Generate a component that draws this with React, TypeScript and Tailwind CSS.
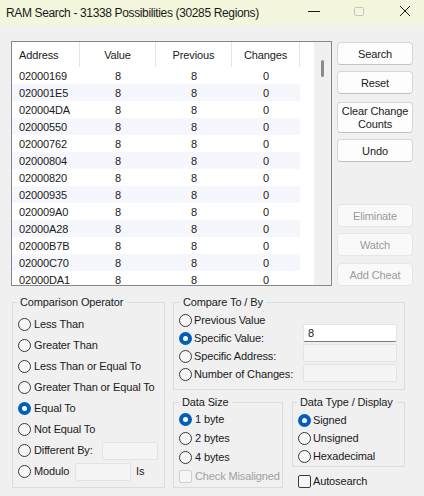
import React from "react";

const rows = [
  "02000169",
  "020001E5",
  "020004DA",
  "02000550",
  "02000762",
  "02000804",
  "02000820",
  "02000935",
  "020009A0",
  "02000A28",
  "02000B7B",
  "02000C70",
  "02000DA1",
];

function Radio({ checked }: { checked?: boolean }) {
  if (checked) {
    return (
      <span className="w-[13px] h-[13px] rounded-full bg-[#005fb8] flex items-center justify-center shrink-0">
        <span className="w-[5px] h-[5px] rounded-full bg-white" />
      </span>
    );
  }
  return <span className="w-[13px] h-[13px] rounded-full border border-[#3a3a3a] bg-[#f6f6f6] shrink-0" />;
}

function Check({ disabled }: { disabled?: boolean }) {
  return (
    <span
      className={
        disabled
          ? "w-[13px] h-[13px] rounded-[2px] border border-[#cfcfcf] bg-[#f5f5f5] shrink-0"
          : "w-[13px] h-[13px] rounded-[2px] border border-[#3a3a3a] bg-[#f6f6f6] shrink-0"
      }
    />
  );
}

function Btn({ label, h = 23, disabled, mt }: { label: React.ReactNode; h?: number; disabled?: boolean; mt: string }) {
  return (
    <div
      className={
        (disabled
          ? "bg-[#f9f9f9] border-[#e6e6e6] text-[#9a9a9a] "
          : "bg-[#fdfdfd] border-[#d6d6d6] border-b-[#c2c2c2] text-[#1a1a1a] ") +
        "w-[76px] border rounded-[4px] flex items-center justify-center text-center leading-[13px] pt-[1px] " +
        mt
      }
      style={{ height: h }}
    >
      {label}
    </div>
  );
}

function Group({
  title,
  titleLeft,
  className,
  children,
}: {
  title: string;
  titleLeft: string;
  className: string;
  children?: React.ReactNode;
}) {
  return (
    <div className={"relative border border-[#dcdcdc] " + className}>
      <span className={"absolute -top-[8px] leading-[14px] px-[3px] bg-[#f0f0f0] whitespace-nowrap " + titleLeft}>{title}</span>
      {children}
    </div>
  );
}

export default function App() {
  return (
    <div className="w-[424px] h-[496px] bg-[#f0f0f0] overflow-hidden text-[11px] tracking-[-0.13px] text-[#1a1a1a] font-['Liberation_Sans',Arial,sans-serif]">
      {/* Title bar */}
      <div className="h-[25px] bg-[#f3f6dc] flex items-center">
        <span className="pl-[6px] text-[12px] tracking-[-0.36px] whitespace-nowrap flex-1 pt-[1px]">RAM Search - 31338 Possibilities (30285 Regions)</span>
        <svg width="133" height="25" viewBox="0 0 133 25" className="shrink-0">
          <line x1="17" y1="11.5" x2="29" y2="11.5" stroke="#1a1a1a" strokeWidth="1" />
          <rect x="63.5" y="7.5" width="9" height="8" rx="1" fill="none" stroke="#c4c4c4" strokeWidth="1" />
          <line x1="109" y1="6" x2="119" y2="16" stroke="#1a1a1a" strokeWidth="1" />
          <line x1="119" y1="6" x2="109" y2="16" stroke="#1a1a1a" strokeWidth="1" />
        </svg>
      </div>

      {/* Top area */}
      <div className="flex pt-[16px] pl-[11px]">
        <div className="w-[321px] h-[245px] border border-[#828790] bg-white flex overflow-hidden">
          <div className="w-[288px] flex flex-col">
            <div className="h-[25px] flex shrink-0">
              <div className="w-[68px] pl-[7px] pt-[1px] flex items-center border-r border-[#e5e5e5]">Address</div>
              <div className="w-[76px] pt-[1px] flex items-center justify-center border-r border-[#e5e5e5]">Value</div>
              <div className="w-[76px] pt-[1px] flex items-center justify-center border-r border-[#e5e5e5]">Previous</div>
              <div className="w-[68px] pt-[1px] flex items-center justify-center border-r border-[#e5e5e5]">Changes</div>
            </div>
            {rows.map((r, i) => (
              <div key={r} className={"h-[17px] pt-[2px] flex shrink-0 items-center " + (i % 2 === 1 ? "bg-[#f6f7fc]" : "bg-white")}>
                <div className="w-[68px] pl-[7px]">{r}</div>
                <div className="w-[76px] text-center">8</div>
                <div className="w-[76px] text-center">8</div>
                <div className="w-[68px] text-center">0</div>
              </div>
            ))}
          </div>
          <div className="w-[14px]" />
          <div className="w-[17px] bg-[#f0f0f0] flex justify-center pt-[18px]">
            <div className="w-[3px] h-[17px] rounded-full bg-[#8a8a8a]" />
          </div>
        </div>

        <div className="ml-[5px] pt-[1px] flex flex-col">
          <Btn label="Search" mt="" />
          <Btn label="Reset" mt="mt-[6px]" />
          <Btn label={<span>Clear Change<br />Counts</span>} h={31} mt="mt-[8px]" />
          <Btn label="Undo" mt="mt-[6px]" />
          <Btn label="Eliminate" disabled mt="mt-[42px]" />
          <Btn label="Watch" disabled mt="mt-[6px]" />
          <Btn label="Add Cheat" disabled mt="mt-[7px]" />
        </div>
      </div>

      {/* Bottom area */}
      <div className="flex mt-[16px] pl-[12px]">
        <Group title="Comparison Operator" titleLeft="left-[4px]" className="w-[153px] h-[186px] pl-[5px] pt-[11px]">
          {["Less Than", "Greater Than", "Less Than or Equal To", "Greater Than or Equal To", "Equal To", "Not Equal To"].map((t) => (
            <div key={t} className="h-[21px] flex items-center gap-[3px] whitespace-nowrap">
              <Radio checked={t === "Equal To"} />
              <span>{t}</span>
            </div>
          ))}
          <div className="h-[21px] flex items-center gap-[3px] whitespace-nowrap pr-[6px]">
            <Radio />
            <span className="flex-1">Different By:</span>
            <div className="w-[56px] h-[18px] bg-[#f4f4f4] border border-[#e3e3e3] rounded-[2px]" />
          </div>
          <div className="h-[21px] flex items-center gap-[3px] whitespace-nowrap">
            <Radio />
            <span className="w-[38px]">Modulo</span>
            <div className="w-[56px] h-[18px] bg-[#f4f4f4] border border-[#e3e3e3] rounded-[2px]" />
            <span className="ml-[2px]">Is</span>
          </div>
        </Group>

        <div className="ml-[8px] w-[232px] flex flex-col">
          <Group title="Compare To / By" titleLeft="left-[6px]" className="h-[88px] flex">
            <div className="pl-[5px] pt-[8px] flex flex-col w-[129px]">
              {["Previous Value", "Specific Value:", "Specific Address:", "Number of Changes:"].map((t) => (
                <div key={t} className="h-[18px] flex items-center gap-[2px] whitespace-nowrap">
                  <Radio checked={t === "Specific Value:"} />
                  <span>{t}</span>
                </div>
              ))}
            </div>
            <div className="pt-[21px] flex flex-col gap-[2px]">
              <div className="w-[94px] h-[18px] bg-white border border-[#e5e5e5] border-b-[#7a7a7a] rounded-[2px] pl-[4px] flex items-center">8</div>
              <div className="w-[94px] h-[18px] bg-[#f4f4f4] border border-[#e3e3e3] rounded-[2px]" />
              <div className="w-[94px] h-[18px] bg-[#f4f4f4] border border-[#e3e3e3] rounded-[2px]" />
            </div>
          </Group>

          <div className="flex mt-[12px]">
            <Group title="Data Size" titleLeft="left-[5px]" className="w-[110px] h-[86px] pl-[5px] pt-[7px]">
              {["1 byte", "2 bytes", "4 bytes"].map((t) => (
                <div key={t} className="h-[19px] flex items-center gap-[3px] whitespace-nowrap">
                  <Radio checked={t === "1 byte"} />
                  <span>{t}</span>
                </div>
              ))}
              <div className="h-[19px] flex items-center gap-[3px] whitespace-nowrap text-[#a0a0a0]">
                <Check disabled />
                <span>Check Misaligned</span>
              </div>
            </Group>

            <div className="ml-[9px] w-[113px] flex flex-col">
              <Group title="Data Type / Display" titleLeft="left-[4px]" className="h-[65px] pl-[5px] pt-[8px]">
                {["Signed", "Unsigned", "Hexadecimal"].map((t) => (
                  <div key={t} className="h-[18px] flex items-center gap-[2px] whitespace-nowrap">
                    <Radio checked={t === "Signed"} />
                    <span>{t}</span>
                  </div>
                ))}
              </Group>
              <div className="mt-[7px] h-[14px] pl-[6px] flex items-center gap-[2px]">
                <Check />
                <span>Autosearch</span>
              </div>
            </div>
          </div>
        </div>
      </div>
    </div>
  );
}
